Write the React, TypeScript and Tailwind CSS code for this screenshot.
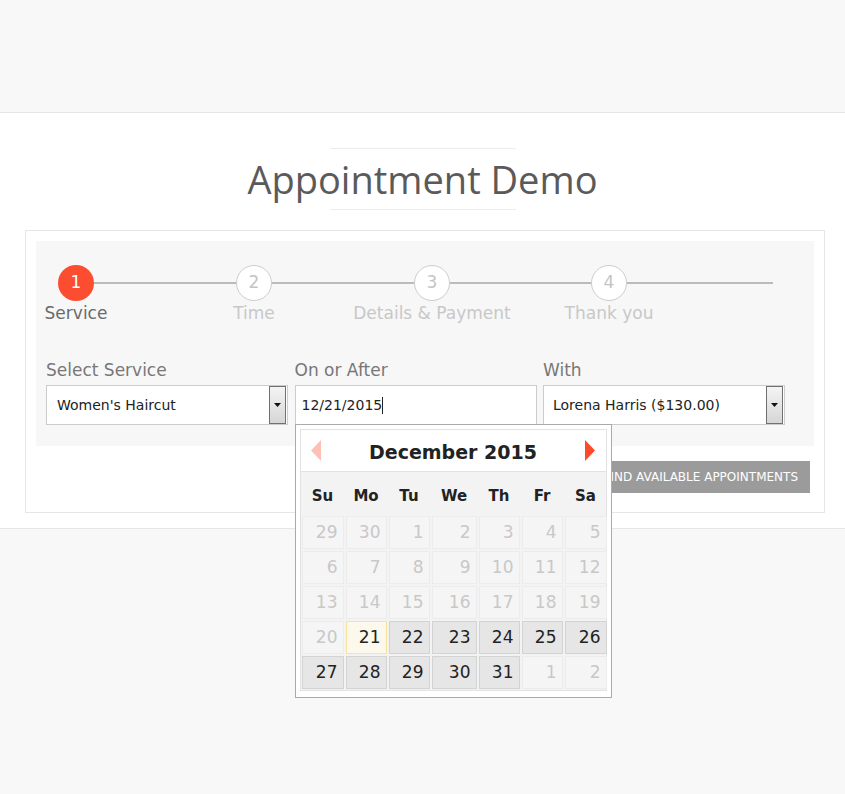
import React from "react";

const font = { fontFamily: '"DejaVu Sans", Verdana, sans-serif' };

type Cell = { d: number; kind: "off" | "today" | "on" };

const rows: Cell[][] = [
  [29, 30, 1, 2, 3, 4, 5].map((d) => ({ d, kind: "off" as const })),
  [6, 7, 8, 9, 10, 11, 12].map((d) => ({ d, kind: "off" as const })),
  [13, 14, 15, 16, 17, 18, 19].map((d) => ({ d, kind: "off" as const })),
  [
    { d: 20, kind: "off" },
    { d: 21, kind: "today" },
    { d: 22, kind: "on" },
    { d: 23, kind: "on" },
    { d: 24, kind: "on" },
    { d: 25, kind: "on" },
    { d: 26, kind: "on" },
  ],
  [
    { d: 27, kind: "on" },
    { d: 28, kind: "on" },
    { d: 29, kind: "on" },
    { d: 30, kind: "on" },
    { d: 31, kind: "on" },
    { d: 1, kind: "off" },
    { d: 2, kind: "off" },
  ],
];

const cellCls: Record<Cell["kind"], string> = {
  off: "bg-[#f5f5f5] border-[#ececec] text-[#c8c8c8]",
  today: "bg-[#fcf9ec] border-[#f8e39a] text-[#222]",
  on: "bg-[#e6e6e6] border-[#d3d3d3] text-[#222]",
};

function DropButton() {
  return (
    <div className="absolute right-[1px] top-[0px] bottom-[0px] w-[17px] border border-[#707070] bg-gradient-to-b from-[#f4f4f4] to-[#d6d6d6] flex items-center justify-center">
      <svg width="7" height="4" viewBox="0 0 7 4">
        <path d="M0 0H7L3.5 4Z" fill="#111" />
      </svg>
    </div>
  );
}

function Step({ n, label, active, w }: { n: number; label: string; active?: boolean; w: string }) {
  return (
    <div className={`${w} flex flex-col`}>
      <div className="flex items-center">
        <div
          className={
            active
              ? "w-[36px] h-[36px] rounded-full bg-[#fc4d31] text-white flex items-center justify-center text-[17px] shrink-0"
              : "w-[36px] h-[36px] rounded-full bg-white border border-[#cccccc] text-[#c4c4c4] flex items-center justify-center text-[17px] shrink-0"
          }
        >
          {n}
        </div>
        <div className="flex-1 h-[2px] bg-[#bbbbbb]" />
      </div>
      <div className="w-[36px] flex justify-center">
        <span className={`whitespace-nowrap text-[17px] leading-[24px] ${active ? "text-[#6a6a6a]" : "text-[#c8c8c8]"}`}>
          {label}
        </span>
      </div>
    </div>
  );
}

export default function App() {
  return (
    <div className="min-h-[794px] bg-[#f8f8f8]" style={font}>
      <div className="h-[113px] bg-[#f8f8f8] border-b border-[#e6e6e6]" />
      <div className="bg-white border-b border-[#e6e6e6] pt-[35px] pb-[15px]">
        <div className="flex flex-col items-center">
          <div className="w-[186px] h-[1px] bg-[#ececec]" />
          <h1
            className="text-[38px] leading-[60px] text-[#5a5a5a] font-normal"
            style={{ fontFamily: '"Open Sans", "Noto Sans", sans-serif' }}
          >
            Appointment Demo
          </h1>
          <div className="w-[186px] h-[1px] bg-[#ececec]" />
        </div>
        <div className="ml-[25px] mr-[20px] mt-[20px] border border-[#e6e6e6] p-[10px] pb-[19px]">
          <div className="bg-[#f7f7f7] pl-[22px] pt-[24px] pb-[21px]">
            <div className="flex">
              <Step n={1} label="Service" active w="w-[178px]" />
              <Step n={2} label="Time" w="w-[178px]" />
              <Step n={3} label="Details & Payment" w="w-[177px]" />
              <Step n={4} label="Thank you" w="w-[182px]" />
            </div>
            <div className="-ml-[12px] mt-[33px] grid grid-cols-[242px_242px_242px] gap-x-[6.5px]">
              <div>
                <div className="text-[17px] leading-[24px] text-[#777]">Select Service</div>
                <div className="relative mt-[3px] h-[40px] bg-white border border-[#cccccc] flex items-center pl-[10px] text-[14px] text-[#222]">
                  Women's Haircut
                  <DropButton />
                </div>
              </div>
              <div className="relative">
                <div className="text-[17px] leading-[24px] text-[#777]">On or After</div>
                <div className="mt-[3px] h-[40px] bg-white border border-[#cccccc] flex items-center pl-[6px] text-[14px] text-[#222]">
                  12/21/2015<span className="inline-block w-[1px] h-[17px] bg-[#222]" />
                </div>
                {/* datepicker */}
                <div className="absolute left-0 top-[66px] w-[317px] z-10 bg-white border border-[#aaaaaa] p-[4px] pb-[6px]">
                  <div className="border border-[#e2e2e2]">
                    <div className="h-[42px] flex items-center justify-between px-[10px] border-b border-[#e2e2e2] bg-white">
                      <svg width="11" height="21" viewBox="0 0 11 21">
                        <path d="M10 0V21L0 10.5Z" fill="#fcc0b5" />
                      </svg>
                      <span className="text-[19px] leading-[24px] mt-[2px] font-bold text-[#222]">December 2015</span>
                      <svg width="11" height="21" viewBox="0 0 11 21">
                        <path d="M0 0V21L10 10.5Z" fill="#fc4a2d" />
                      </svg>
                    </div>
                    <div className="bg-[#f3f3f3] px-[1px] pb-[1px]">
                      <div className="grid grid-cols-[42px_41px_41px_45px_41px_41px_42px] gap-x-[2px]">
                        {["Su", "Mo", "Tu", "We", "Th", "Fr", "Sa"].map((d) => (
                          <div key={d} className="h-[43px] pt-[5px] flex items-center justify-center text-[15px] font-bold text-[#222]">
                            {d}
                          </div>
                        ))}
                      </div>
                      <div className="grid grid-cols-[42px_41px_41px_45px_41px_41px_42px] gap-[2px] pt-[1px]">
                        {rows.flat().map((c, i) => (
                          <div
                            key={i}
                            className={`h-[33px] border flex items-center justify-end pr-[5px] text-[17px] ${cellCls[c.kind]}`}
                          >
                            {c.d}
                          </div>
                        ))}
                      </div>
                    </div>
                  </div>
                </div>
              </div>
              <div>
                <div className="text-[17px] leading-[24px] text-[#777]">With</div>
                <div className="relative mt-[3px] h-[40px] bg-white border border-[#cccccc] flex items-center pl-[9px] text-[14px] text-[#222]">
                  Lorena Harris ($130.00)
                  <DropButton />
                </div>
              </div>
            </div>
          </div>
          <div className="flex justify-end mt-[15px] pr-[4px]">
            <button className="h-[32px] px-[12px] bg-[#9b9b9b] text-white text-[12px] uppercase">
              Find available appointments
            </button>
          </div>
        </div>
      </div>
    </div>
  );
}
